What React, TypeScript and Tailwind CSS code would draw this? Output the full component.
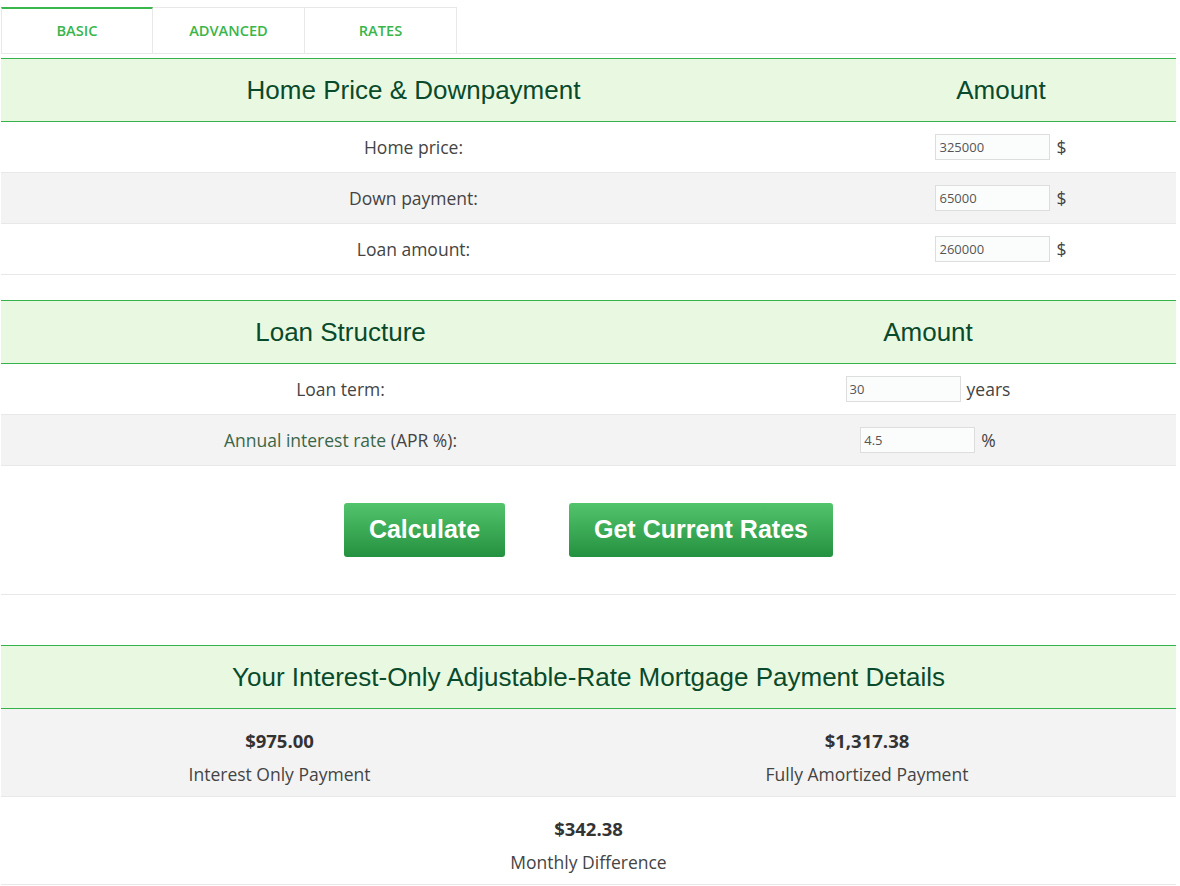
import React from 'react';

const sans = { fontFamily: '"Open Sans", "Liberation Sans", sans-serif' };

function Tabs() {
  const tabs = ['BASIC', 'ADVANCED', 'RATES'];
  return (
    <div className="flex h-[54px] items-end border-b border-[#e8e8e8] pt-[8px]">
      {tabs.map((t, i) => (
        <div
          key={t}
          className={`flex h-[46px] w-[152px] items-center justify-center border-r border-[#e8e8e8] text-[14.6px] font-semibold text-[#3ab54a] ${
            i === 0 ? 'border-l border-t-2 border-t-[#3ab54a]' : 'border-t'
          } ${i === 0 ? '' : 'border-t-[#e8e8e8]'}`}
        >
          {t}
        </div>
      ))}
    </div>
  );
}

function Header({ cols }: { cols: { label: string; w: string }[] }) {
  return (
    <div className="flex h-[64px] border-y border-[#35b34a] bg-[#e9f9e1]">
      {cols.map((c) => (
        <div
          key={c.label}
          className={`${c.w} flex items-center justify-center text-[26px] text-[#0a4a2c]`}
          style={{ fontFamily: '"Liberation Sans", Arial, sans-serif' }}
        >
          {c.label}
        </div>
      ))}
    </div>
  );
}

function InputRow({
  label,
  value,
  unit,
  gray,
  leftW,
  rightW,
}: {
  label: React.ReactNode;
  value: string;
  unit: string;
  gray?: boolean;
  leftW: string;
  rightW: string;
}) {
  return (
    <div className={`flex h-[51px] border-b border-[#e8e8e8] ${gray ? 'bg-[#f3f3f3]' : 'bg-white'}`}>
      <div className={`${leftW} flex items-center justify-center text-[17.5px] text-[#444]`}>{label}</div>
      <div className={`${rightW} flex items-center justify-center gap-[6px]`}>
        <input
          readOnly
          value={value}
          className="h-[26px] w-[115px] border border-[#dddddd] bg-[#fbfdfd] px-[3px] text-[13px] text-[#555] outline-none"
          style={sans}
        />
        <span className="text-[17.5px] text-[#444]">{unit}</span>
      </div>
    </div>
  );
}

function ResultCell({ value, label }: { value: string; label: string }) {
  return (
    <div className="flex flex-col items-center justify-center gap-[7px] pt-[9px]">
      <div className="text-[18.5px] font-bold text-[#333]">{value}</div>
      <div className="text-[17.5px] text-[#444]">{label}</div>
    </div>
  );
}

export default function App() {
  return (
    <div className="min-h-[886px] bg-white" style={sans}>
      <div className="ml-[1px] w-[1175px]">
        <Tabs />

        <div className="mt-[4px]">
          <Header
            cols={[
              { label: 'Home Price & Downpayment', w: 'w-[825px]' },
              { label: 'Amount', w: 'w-[350px]' },
            ]}
          />
          <InputRow label="Home price:" value="325000" unit="$" leftW="w-[825px]" rightW="w-[350px]" />
          <InputRow label="Down payment:" value="65000" unit="$" gray leftW="w-[825px]" rightW="w-[350px]" />
          <InputRow label="Loan amount:" value="260000" unit="$" leftW="w-[825px]" rightW="w-[350px]" />
        </div>

        <div className="mt-[25px]">
          <Header
            cols={[
              { label: 'Loan Structure', w: 'w-[679px]' },
              { label: 'Amount', w: 'w-[496px]' },
            ]}
          />
          <InputRow label="Loan term:" value="30" unit="years" leftW="w-[679px]" rightW="w-[496px]" />
          <InputRow
            label={
              <span>
                <span className="font-medium text-[#3a6648]">Annual interest rate</span> (APR %):
              </span>
            }
            value="4.5"
            unit="%"
            gray
            leftW="w-[679px]"
            rightW="w-[496px]"
          />
        </div>

        <div className="flex h-[129px] items-center justify-center gap-[64px] border-b border-[#e8e8e8] pb-[1px]">
          {['Calculate', 'Get Current Rates'].map((b) => (
            <button
              key={b}
              className={`h-[54px] rounded-[3px] bg-gradient-to-b from-[#52c46c] to-[#23913f] text-[25px] font-bold text-white ${
                b === 'Calculate' ? 'w-[161px]' : 'w-[264px]'
              }`}
              style={{ fontFamily: '"Liberation Sans", Arial, sans-serif' }}
            >
              {b}
            </button>
          ))}
        </div>

        <div className="mt-[50px]">
          <Header cols={[{ label: 'Your Interest-Only Adjustable-Rate Mortgage Payment Details', w: 'w-full' }]} />
          <div className="grid h-[88px] grid-cols-[557px_1fr] border-b border-[#e8e8e8] bg-[#f3f3f3]">
            <ResultCell value="$975.00" label="Interest Only Payment" />
            <ResultCell value="$1,317.38" label="Fully Amortized Payment" />
          </div>
          <div className="flex h-[88px] items-center justify-center border-b border-[#e8e8e8]">
            <ResultCell value="$342.38" label="Monthly Difference" />
          </div>
        </div>
      </div>
    </div>
  );
}
